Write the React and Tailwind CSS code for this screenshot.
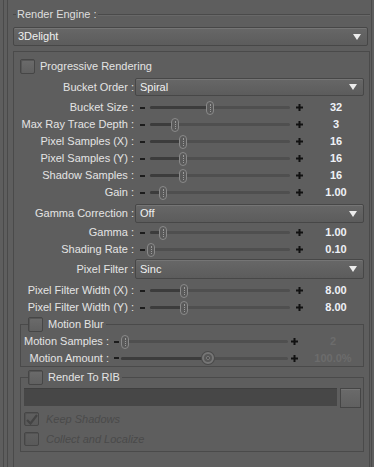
import React from "react";

function Arrow() {
  return (
    <svg width="8" height="6" viewBox="0 0 8 6" className="shrink-0">
      <path d="M0 0H8L4 6Z" fill="#ececec" />
    </svg>
  );
}

function Dropdown({ value, className }) {
  return (
    <div
      className={`flex items-center justify-between border border-[#474747] rounded-[2px] bg-linear-to-b from-[#676767] to-[#5c5c5c] shadow-[inset_0_1px_0_#757575] ${className}`}
    >
      <span className="pl-[4px] text-[11px] text-[#f0f0f0] leading-none">{value}</span>
      <span className="mr-[6px] flex">
        <Arrow />
      </span>
    </div>
  );
}

function Checkbox({ checked, disabled, h = "h-[15px]" }) {
  return (
    <div
      className={`w-[15px] ${h} shrink-0 border border-[#464646] rounded-[2px] flex items-center justify-center ${
        disabled
          ? "bg-linear-to-b from-[#5f5f5f] to-[#595959] shadow-[inset_1px_1px_0_#535353]"
          : "bg-linear-to-b from-[#6b6b6b] to-[#606060] shadow-[inset_1px_1px_0_#565656]"
      }`}
    >
      {checked && (
        <svg width="12" height="11" viewBox="0 0 12 11">
          <path d="M1 6 L4.5 9.5 L11 1" stroke="#444444" strokeWidth="2.2" fill="none" />
        </svg>
      )}
    </div>
  );
}

function Minus() {
  return <div className="w-[5px] h-[2px] bg-[#1c1c1c] shrink-0" />;
}

function Plus() {
  return (
    <svg width="7" height="7" viewBox="0 0 7 7" className="shrink-0">
      <rect x="2.5" y="0" width="2" height="7" fill="#111" />
      <rect x="0" y="2.5" width="7" height="2" fill="#111" />
    </svg>
  );
}

function Track({ x, widthClass, round }) {
  return (
    <div className={`relative ${widthClass} h-[14px] flex items-center shrink-0`}>
      <div className="relative w-full h-[3px] rounded-full bg-[#4f4f4f]">
        <div className="absolute left-0 top-0 h-[3px] rounded-full bg-[#3c3c3c]" style={{ width: x }} />
      </div>
      {round ? (
        <div
          className="absolute top-1/2 -translate-y-1/2 -translate-x-1/2 w-[12px] h-[12px] rounded-full border-2 border-[#767676] bg-[#575757] shadow-[0_0_0_1px_#4a4a4a] flex items-center justify-center"
          style={{ left: x }}
        >
          <div className="w-[4px] h-[4px] rounded-full bg-[#3e3e3e] border border-[#808080]" />
        </div>
      ) : (
        <div
          className="absolute top-1/2 -translate-y-1/2 -translate-x-1/2 w-[8px] h-[14px] rounded-full border border-[#8a8a8a] bg-[#5a5a5a] flex items-center justify-center"
          style={{ left: x }}
        >
          <div className="h-[8px] border-l border-dotted border-[#9c9c9c]" />
        </div>
      )}
    </div>
  );
}

function SliderRow({ label, x, value }) {
  return (
    <div className="flex items-center h-[17px]">
      <div className="w-[121px] shrink-0 text-right pr-[1px] text-[11px] leading-none text-[#e4e4e4] whitespace-nowrap">
        {label} :
      </div>
      <div className="ml-[5px]">
        <Minus />
      </div>
      <div className="ml-[5px]">
        <Track x={x} widthClass="w-[140px]" />
      </div>
      <div className="ml-[6px] flex">
        <Plus />
      </div>
      <div className="ml-[13px] w-[40px] text-center text-[11px] leading-none font-bold text-[#eef1f7]">
        {value}
      </div>
    </div>
  );
}

function DropRow({ label, value, h }) {
  return (
    <div className={`flex items-center ${h}`}>
      <div className="w-[121px] shrink-0 text-right pr-[1px] text-[11px] leading-none text-[#e4e4e4] whitespace-nowrap">
        {label} :
      </div>
      <Dropdown value={value} className="flex-1 h-full mr-[5px]" />
    </div>
  );
}

function MotionRow({ label, x, value, h, round }) {
  return (
    <div className={`flex items-center ${h}`}>
      <div className="w-[88px] shrink-0 text-right text-[11px] leading-none text-[#e4e4e4] whitespace-nowrap">
        {label} :
      </div>
      <div className="ml-[5px]">
        <Minus />
      </div>
      <div className="ml-[2px]">
        <Track x={x} widthClass="w-[167px]" round={round} />
      </div>
      <div className="ml-[3px] flex">
        <Plus />
      </div>
      <div className="ml-[15px] w-[40px] text-center text-[11px] leading-none font-bold text-[#6c6c6c]">
        {value}
      </div>
    </div>
  );
}

export default function App() {
  return (
    <div className="w-[374px] h-[467px] overflow-hidden bg-[#5e5e5e] pl-[3px] pr-[2px] font-['Liberation_Sans',Arial,sans-serif]">
      <div className="h-full border-l border-[#4a4a4a] pl-[3px]">
        <div className="h-full border-l border-r border-[#4a4a4a] pl-[5px] flex flex-col">
          {/* Title */}
          <div className="mt-[8px] h-[12px] flex items-center mr-[1px]">
            <div className="w-[3px] h-px bg-[#4a4a4a]" />
            <span className="px-[1px] text-[11px] leading-none text-[#dedede] whitespace-nowrap">Render Engine :</span>
            <div className="flex-1 h-px bg-[#4a4a4a] shadow-[0_1px_0_#686868]" />
          </div>
          {/* Engine dropdown */}
          <Dropdown value="3Delight" className="mt-[7px] h-[19px] mr-[3px]" />

          {/* Main group */}
          <div className="mt-[5px] flex-1 border-l border-t border-r border-[#4a4a4a] mr-[1px] flex flex-col">
            <div className="mt-[7px] ml-[6px] flex items-center h-[15px]">
              <Checkbox />
              <span className="ml-[5px] text-[11px] leading-none text-[#e4e4e4]">Progressive Rendering</span>
            </div>

            <div className="mt-[4px]">
              <DropRow label="Bucket Order" value="Spiral" h="h-[18px]" />
            </div>

            <div className="mt-[3px] flex flex-col">
              <SliderRow label="Bucket Size" x={60} value="32" />
              <SliderRow label="Max Ray Trace Depth" x={25} value="3" />
              <SliderRow label="Pixel Samples (X)" x={33} value="16" />
              <SliderRow label="Pixel Samples (Y)" x={33} value="16" />
              <SliderRow label="Shadow Samples" x={33} value="16" />
              <SliderRow label="Gain" x={13} value="1.00" />
            </div>

            <div className="mt-[3px]">
              <DropRow label="Gamma Correction" value="Off" h="h-[19px]" />
            </div>

            <div className="mt-[1px] flex flex-col">
              <SliderRow label="Gamma" x={13} value="1.00" />
              <SliderRow label="Shading Rate" x={1} value="0.10" />
            </div>

            <div className="mt-[1px]">
              <DropRow label="Pixel Filter" value="Sinc" h="h-[20px]" />
            </div>

            <div className="mt-[3px] flex flex-col">
              <SliderRow label="Pixel Filter Width (X)" x={34} value="8.00" />
              <SliderRow label="Pixel Filter Width (Y)" x={34} value="8.00" />
            </div>

            {/* Motion Blur */}
            <fieldset className="mt-[1px] ml-[6px] mr-[5px] border border-[#4a4a4a] p-0 min-w-0">
              <legend className="ml-[7px] pr-[2px] p-0">
                <div className="flex items-center h-[15px]">
                  <Checkbox />
                  <span className="ml-[5px] text-[11px] leading-none text-[#e4e4e4]">Motion Blur</span>
                </div>
              </legend>
              <div className="mt-[1px]">
                <MotionRow label="Motion Samples" x={4} value="2" h="h-[17px]" />
              </div>
              <MotionRow label="Motion Amount" x={87} value="100.0%" h="h-[16px]" round />
            </fieldset>

            {/* Render To RIB */}
            <fieldset className="mt-[3px] ml-[6px] mr-[5px] border border-[#4a4a4a] p-0 pb-[5px] min-w-0">
              <legend className="ml-[7px] pr-[2px] p-0">
                <div className="flex items-center h-[15px]">
                  <Checkbox />
                  <span className="ml-[5px] text-[11px] leading-none text-[#e4e4e4]">Render To RIB</span>
                </div>
              </legend>
              <div className="mt-[3px] ml-[3px] flex items-start">
                <div className="w-[313px] h-[18px] bg-[#474747] border-t border-[#3f3f3f]" />
                <div className="ml-[3px] w-[21px] h-[20px] border border-[#454545] bg-linear-to-b from-[#6a6a6a] to-[#606060] shadow-[inset_0_1px_0_#747474]" />
              </div>
              <div className="mt-[4px] ml-[3px] flex items-center h-[14px]">
                <Checkbox checked disabled h="h-[14px]" />
                <span className="ml-[7px] text-[11px] italic leading-none text-[#4a4a4a]">Keep Shadows</span>
              </div>
              <div className="mt-[6px] ml-[3px] flex items-center h-[14px]">
                <Checkbox disabled h="h-[14px]" />
                <span className="ml-[7px] text-[11px] italic leading-none text-[#4a4a4a]">Collect and Localize</span>
              </div>
            </fieldset>
          </div>
        </div>
      </div>
    </div>
  );
}
